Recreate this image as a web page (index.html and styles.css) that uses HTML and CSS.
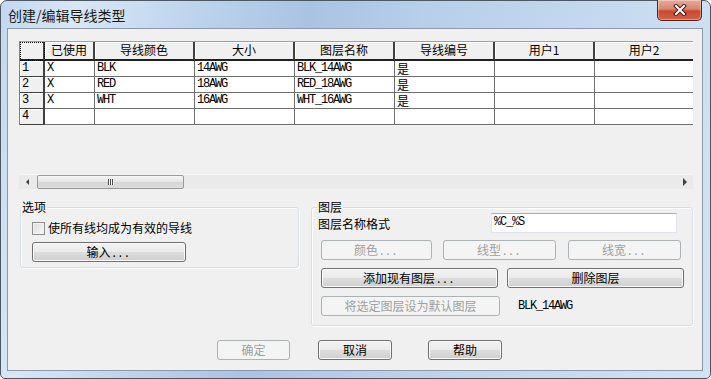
FILE: index.html
```html
<!DOCTYPE html>
<html>
<head>
  <meta charset="UTF-8">
  <title>创建/编辑导线类型</title>
  <link rel="stylesheet" href="styles.css">
</head>
<body>
<div class="window">
  <div class="titlebar">
    <span class="title">创建/编辑导线类型</span>
    <div class="close">
      <svg width="14" height="12" viewBox="0 0 14 12">
        <path d="M3 2 L11 10 M11 2 L3 10" stroke="#4a1a12" stroke-width="4" stroke-linecap="square"/>
        <path d="M3 2 L11 10 M11 2 L3 10" stroke="#ffffff" stroke-width="2" stroke-linecap="square"/>
      </svg>
    </div>
  </div>

  <div class="client">
    <!-- grid -->
    <div class="grid">
      <div class="sheet-area">
        <div class="sheet">
          <div class="corner"></div>
          <div class="colhead">已使用</div>
          <div class="colhead">导线颜色</div>
          <div class="colhead">大小</div>
          <div class="colhead">图层名称</div>
          <div class="colhead">导线编号</div>
          <div class="colhead">用户1</div>
          <div class="colhead">用户2</div>

          <div class="rowhead">1</div>
          <div class="cell">X</div><div class="cell">BLK</div><div class="cell">14AWG</div>
          <div class="cell">BLK_14AWG</div><div class="cell cjk">是</div><div class="cell"></div><div class="cell"></div>

          <div class="rowhead">2</div>
          <div class="cell">X</div><div class="cell">RED</div><div class="cell">18AWG</div>
          <div class="cell">RED_18AWG</div><div class="cell cjk">是</div><div class="cell"></div><div class="cell"></div>

          <div class="rowhead">3</div>
          <div class="cell">X</div><div class="cell">WHT</div><div class="cell">16AWG</div>
          <div class="cell">WHT_16AWG</div><div class="cell cjk">是</div><div class="cell"></div><div class="cell"></div>

          <div class="rowhead">4</div>
          <div class="cell"></div><div class="cell"></div><div class="cell"></div>
          <div class="cell"></div><div class="cell"></div><div class="cell"></div><div class="cell"></div>
        </div>
      </div>
      <div class="hscroll">
        <div class="arrow"><span class="tri-left"></span></div>
        <div class="track">
          <div class="thumb"><span class="grip"></span><span class="grip"></span><span class="grip"></span></div>
        </div>
        <div class="arrow"><span class="tri-right"></span></div>
      </div>
    </div>

    <!-- group boxes -->
    <div class="groups">
      <fieldset class="box options">
        <legend>选项</legend>
        <label class="check"><span class="checkbox"></span>使所有线均成为有效的导线</label>
        <button class="btn btn_input">输入<span class="dots">...</span></button>
      </fieldset>

      <fieldset class="box layers">
        <legend>图层</legend>
        <div class="format_row">
          <span class="format_label">图层名称格式</span>
          <div class="textbox">%C_%S</div>
        </div>
        <div class="btn_row row1">
          <button class="btn off b_color">颜色<span class="dots">...</span></button>
          <button class="btn off b_ltype">线型<span class="dots">...</span></button>
          <button class="btn off b_lwidth">线宽<span class="dots">...</span></button>
        </div>
        <div class="btn_row row2">
          <button class="btn b_add">添加现有图层<span class="dots">...</span></button>
          <button class="btn b_del">删除图层</button>
        </div>
        <div class="btn_row row3">
          <button class="btn off b_default">将选定图层设为默认图层</button>
          <span class="current">BLK_14AWG</span>
        </div>
      </fieldset>
    </div>

    <!-- dialog buttons -->
    <div class="actions">
      <button class="btn off b_ok">确定</button>
      <button class="btn b_cancel">取消</button>
      <button class="btn b_help">帮助</button>
    </div>
  </div>
</div>
</body>
</html>
```

FILE: styles.css
```css
* {box-sizing: border-box;}
html, body {margin: 0; padding: 0; background: #ffffff;}
body {font-family: "Noto Sans CJK SC", "Noto Sans", sans-serif; font-size: 12px; color: #000;}

/* window frame */
.window {
  width: 711px; height: 379px;
  border: 1px solid #4d5866;
  border-radius: 7px 7px 5px 5px;
  background: linear-gradient(100deg, #c3d8ee 0%, #d9e7f5 10%, #bdd4ec 25%, #a9c4e1 40%, #b7cfe9 55%, #c3d8ee 75%, #d3e3f3 100%);
  padding: 0 7px 7px 6px;
  display: flex; flex-direction: column;
}
.titlebar {height: 27px; display: flex; align-items: flex-start; position: relative;}
.title {font-size: 14px; line-height: 14px; margin: 7px 0 0 1px; color: #1a1a1a;}
.close {
  position: absolute; right: 1px; top: -1px;
  width: 45px; height: 21px;
  border: 1px solid #5b1d14; border-top: none;
  border-radius: 0 0 5px 5px;
  background: linear-gradient(#e9a99a 0%, #d88670 45%, #c8492f 55%, #d2624a 100%);
  box-shadow: inset 0 0 0 1px rgba(255,255,255,0.35);
  display: flex; align-items: center; justify-content: center;
}

.client {
  flex: 1;
  background: #f0f0f0;
  border: 1px solid #8d99a8;
  padding: 12px 0 0 11px;
}

/* spreadsheet */
.grid {width: 674px; height: 148px; display: flex; flex-direction: column; overflow: hidden;}
.sheet-area {flex: 1; overflow: hidden;}
.sheet {
  display: grid;
  grid-template-columns: 25px 50px repeat(6, 100px);
  grid-template-rows: 19px repeat(4, 16px);
  width: max-content;
  border-left: 1px solid #808080;
  border-top: 1px solid #a0a0a0;
}
.sheet > div {
  border-right: 1px solid #6f6f6f;
  border-bottom: 1px solid #6f6f6f;
  white-space: nowrap; overflow: hidden;
}
.sheet .corner {background: #f0f0f0; outline: 1px dotted #000; outline-offset: -1px; border-right: 2px solid #404040; border-bottom: 2px solid #202020;}
.sheet .colhead {
  background: #f0f0f0;
  text-align: center; line-height: 16px;
  border-right: 2px solid #404040;
  border-bottom: 2px solid #202020;
  box-shadow: inset 1px 1px #ffffff;
}
.mono, .sheet .rowhead, .sheet .cell, .textbox, .current {
  font-family: "Liberation Mono", monospace; font-size: 12px; letter-spacing: -1.2px;
}
.sheet .rowhead {
  background: #f0f0f0;
  line-height: 15px; padding-left: 2px;
  border-right: 2px solid #404040;
  border-bottom: 1px solid #404040;
  box-shadow: inset 1px 1px #ffffff;
}
.sheet .cell {background: #ffffff; line-height: 15px; padding-left: 2px;}
.sheet .cell.cjk {font-family: "Noto Sans CJK SC", sans-serif; font-size: 12px; letter-spacing: 0;}

/* horizontal scroll bar */
.hscroll {height: 15px; display: flex; background: #eaeaea; border-top: 1px solid #f6f6f6;}
.arrow {width: 17px; display: flex; align-items: center; justify-content: center;}
.tri-left {width: 0; height: 0; border-top: 3px solid transparent; border-bottom: 3px solid transparent; border-right: 3px solid #404040;}
.tri-right {width: 0; height: 0; border-top: 4px solid transparent; border-bottom: 4px solid transparent; border-left: 4px solid #404040;}
.track {flex: 1;}
.thumb {
  margin-left: 1px; width: 147px; height: 14px;
  border: 1px solid #9a9a9a; border-radius: 2px;
  background: linear-gradient(#f6f6f6, #e4e4e4 50%, #d6d6d6 51%, #dcdcdc);
  display: flex; align-items: center; justify-content: center; gap: 1px;
}
.grip {width: 1px; height: 6px; background: #4d4d4d; box-shadow: 1px 0 #ffffff;}

/* group boxes */
.groups {display: flex; align-items: flex-start; gap: 12px; margin: 11px 0 0 1px;}
.box {
  margin: 0; padding: 0 0 0 11px; min-width: 0;
  border: 1px solid #d5dfe5; border-radius: 3px;
  box-shadow: inset 1px 1px #ffffff, 1px 1px #ffffff;
}
.box legend {padding: 0 1px; margin-left: -11px; line-height: 14px; font-size: 12px;}
.options {width: 279px; height: 68px;}
.layers {width: 382px; height: 126px; padding-left: 9px;}
.layers legend {margin-left: -4px;}

.check {display: flex; align-items: center; height: 16px; margin-top: 6px; line-height: 16px;}
.checkbox {
  width: 13px; height: 13px; margin-right: 3px;
  border: 1px solid #8e8f8f;
  background: linear-gradient(135deg, #dcdcdc, #f8f8f8);
  box-shadow: inset 0 0 0 1px #f4f4f4;
}

/* buttons */
.btn {
  display: block; height: 20px; padding: 0;
  font-family: "Noto Sans CJK SC", sans-serif; font-size: 12px; line-height: 16px; color: #000;
  border: 1px solid #707070; border-radius: 3px;
  background: linear-gradient(#f2f2f2 0%, #ebebeb 50%, #dddddd 51%, #cfcfcf 100%);
  box-shadow: inset 0 0 0 1px #fbfbfb;
}
.btn .dots {letter-spacing: 3px; margin-left: 2px;}
.btn.off {border-color: #adb2b5; background: #f4f4f4; color: #a0a0a0; box-shadow: none;}
.btn_input {width: 154px; margin-top: 6px;}

.format_row {display: flex; align-items: center; height: 20px; margin-top: -1px;}
.format_label {width: 173px; margin-left: -3px;}
.textbox {
  width: 186px; height: 20px; background: #fff;
  border: 1px solid #e2e3ea; border-top-color: #abadb3;
  line-height: 16px; padding-left: 2px;
}
.btn_row {display: flex; align-items: center;}
.row1 {margin-top: 7px;}
.row2, .row3 {margin-top: 8px;}
.b_color {width: 111px;}
.b_ltype {width: 113px; margin-left: 11px;}
.b_lwidth {width: 113px; margin-left: 12px;}
.b_add {width: 177px;}
.b_del {width: 177px; margin-left: 9px;}
.b_default {width: 179px;}
.current {margin-left: 18px;}

.actions {display: flex; margin: 14px 0 0 198px;}
.b_ok {width: 73px;}
.b_cancel {width: 74px; margin-left: 28px;}
.b_help {width: 74px; margin-left: 36px;}
```
